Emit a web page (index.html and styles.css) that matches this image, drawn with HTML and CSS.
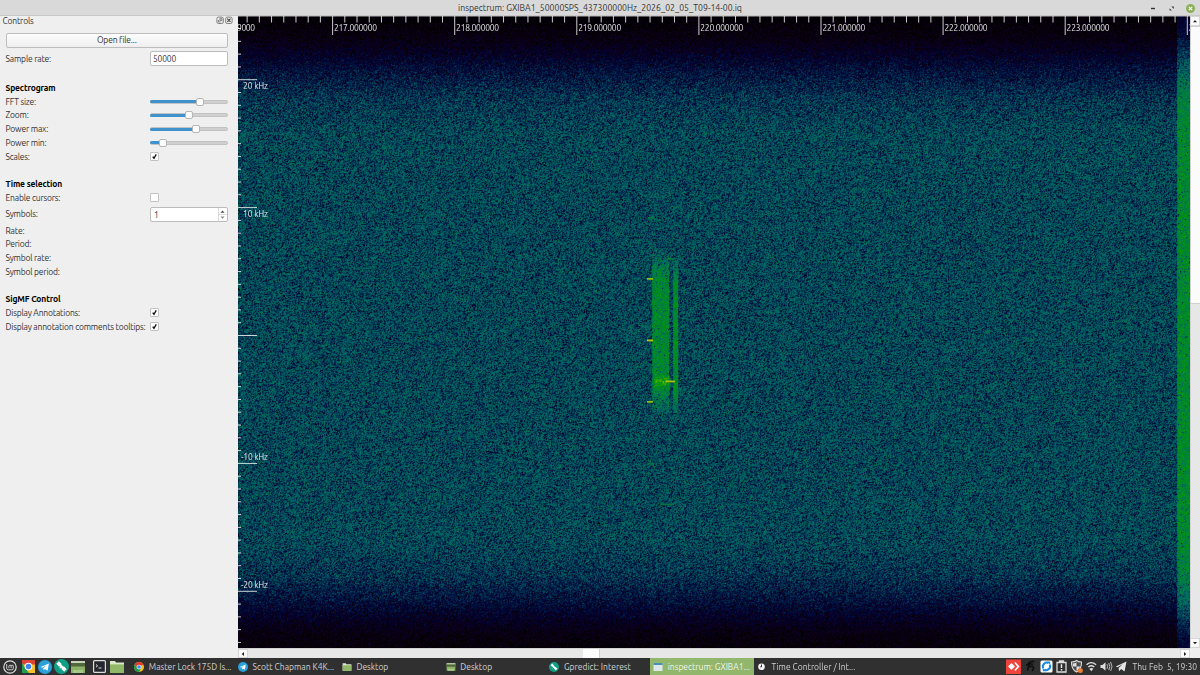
FILE: index.html
```html
<!DOCTYPE html>
<html lang="en">
<head>
    <meta charset="UTF-8">
    <meta name="viewport" content="width=device-width, initial-scale=1.0">
    <title>inspectrum</title>
    <link rel="stylesheet" href="styles.css">
</head>
<body>

    <!-- Title bar -->
    <header class="titlebar">
        <span class="window-title">inspectrum: GXIBA1_50000SPS_437300000Hz_2026_02_05_T09-14-00.iq</span>
        <svg class="window-buttons" width="52" height="16" viewBox="0 0 52 16">
            <path d="M3 7.5h4" stroke="#333" stroke-width="1.4"/>
            <path d="M23.4 5.5h2.400v2.400zM21.600 7.300v2.200h2.200z" fill="#333"/>
            <circle cx="42.5" cy="7.5" r="4.5" fill="#8bb158"/>
            <path d="M40.8 5.8l3.4 3.4M44.2 5.8l-3.4 3.4" stroke="#fff" stroke-width="1.2"/>
        </svg>
    </header>

    <main class="window">
        <!-- Controls dock -->
        <aside class="dock">
            <div class="dock-title">
                <span>Controls</span>
                <svg width="17" height="9" viewBox="0 0 17 9" fill="none" stroke="#666" stroke-width=".8">
                    <rect x=".9" y="1.1" width="6.4" height="6.4" rx="1.5"/>
                    <path d="M3.9 2.6h2v2h-2zM2.5 4v2h2"/>
                    <rect x="9.7" y="1.1" width="6.4" height="6.4" rx="1.5"/>
                    <path d="M11.3 2.7l3.2 3.2M14.5 2.7l-3.2 3.2" stroke="#444" stroke-width="1.1"/>
                </svg>
            </div>
            <button class="open-btn">Open file...</button>
            <div class="row row-rate"><label>Sample rate:</label><div class="field">50000</div></div>

            <section>
                <h2 class="row">Spectrogram</h2>
                <div class="row"><label>FFT size:</label><div class="slider"><i style="width: 50px"></i></div></div>
                <div class="row"><label>Zoom:</label><div class="slider"><i style="width: 39px"></i></div></div>
                <div class="row"><label>Power max:</label><div class="slider"><i style="width: 46px"></i></div></div>
                <div class="row"><label>Power min:</label><div class="slider"><i style="width: 12.5px"></i></div></div>
                <div class="row"><label>Scales:</label><div class="check"><svg viewBox="0 0 8 8"><path d="M2 4.1l1.4 1.9L6 1.6"/></svg></div></div>
            </section>

            <section>
                <h2 class="row">Time selection</h2>
                <div class="row"><label>Enable cursors:</label><div class="check"></div></div>
                <div class="row row-symbols"><label>Symbols:</label>
                    <div class="field spin">1
                        <svg width="9" height="13" viewBox="0 0 9 13">
                            <path d="M.5 0v13M.5 6.5h8" stroke="#ccc" stroke-width=".7"/>
                            <path d="M2.5 4.7h4l-2-2.3z" fill="#444"/>
                            <path d="M2.5 8.5h4l-2 2.3z" fill="#888"/>
                        </svg>
                    </div>
                </div>
                <div class="row"><label>Rate:</label></div>
                <div class="row"><label>Period:</label></div>
                <div class="row"><label>Symbol rate:</label></div>
                <div class="row"><label>Symbol period:</label></div>
            </section>

            <section>
                <h2 class="row">SigMF Control</h2>
                <div class="row"><label>Display Annotations:</label><div class="check"><svg viewBox="0 0 8 8"><path d="M2 4.1l1.4 1.9L6 1.6"/></svg></div></div>
                <div class="row"><label>Display annotation comments tooltips:</label><div class="check"><svg viewBox="0 0 8 8"><path d="M2 4.1l1.4 1.9L6 1.6"/></svg></div></div>
            </section>
        </aside>

        <!-- Spectrogram view -->
        <div class="view">
            <div class="plot">
                <canvas id="spectrogram" width="952" height="632"></canvas>
                <svg id="scales" width="952" height="632"></svg>
            </div>
            <div class="vscroll">
                <span class="arrow"><svg viewBox="0 0 6 6"><path d="M1 4.3h4L3 2z"/></svg></span>
                <span class="vhandle"></span>
                <span class="vtrack"></span>
                <span class="arrow"><svg viewBox="0 0 6 6"><path d="M1 2h4L3 4.3z"/></svg></span>
            </div>
            <div class="hscroll">
                <span class="arrow"><svg viewBox="0 0 6 6"><path d="M4 1v4L1.7 3z"/></svg></span>
                <span class="htrack"><span class="hhandle"></span></span>
                <span class="arrow"><svg viewBox="0 0 6 6"><path d="M2 1v4L4.3 3z"/></svg></span>
            </div>
        </div>
    </main>

    <!-- Shared icons -->
    <svg class="defs" width="0" height="0">
        <symbol id="chrome" viewBox="0 0 16 16">
            <circle cx="8" cy="8" r="8" fill="#fbc116"/>
            <path d="M1.1 4A8 8 0 0 1 14.9 4L8 8H4.5z" fill="#e33b2e"/>
            <path d="M1.1 4A8 8 0 0 0 8 16l3.3-6.2L8 8H4.5z" fill="#219a4b"/>
            <circle cx="8" cy="8" r="3.8" fill="#fff"/>
            <circle cx="8" cy="8" r="2.9" fill="#4285f4"/>
        </symbol>
        <symbol id="telegram" viewBox="0 0 16 16">
            <circle cx="8" cy="8" r="8" fill="#2aa1da"/>
            <path d="M3 8l9.5-4-1.6 8.4-3-2.1-1.5 1.5-.4-2.5 4-3.5-5 3.1z" fill="#fff"/>
        </symbol>
        <symbol id="satellite" viewBox="0 0 16 16">
            <circle cx="8" cy="8" r="8" fill="#12a085"/>
            <path d="M3.800 3.800l3 3M9.200 9.200l3 3" stroke="#fff" stroke-width="3.8"/>
            <path d="M6.500 6.500l3 3" stroke="#fff" stroke-width="2.600"/>
            <path d="M6 10l1.500-1.500" stroke="#fff" stroke-width="1.200"/>
        </symbol>
        <symbol id="folder" viewBox="0 0 16 14">
            <path d="M1 1h5l1 1.5h8V13H1z" fill="#dce8cc"/>
            <path d="M1 4h14v9H1z" fill="#91b769"/>
            <path d="M1 4h14v1H1z" fill="#aecb8d"/>
        </symbol>
        <symbol id="desktop" viewBox="0 0 16 14">
            <path d="M1 1h14v12H1z" fill="#8db267"/>
            <path d="M1 1h14v2H1z" fill="#c7d4bb"/>
            <path d="M1 3h14v3.5H1z" fill="#51683d"/>
            <path d="M3 10h10v3H3z" fill="#a9c98a"/>
        </symbol>
    </svg>

    <!-- Taskbar -->
    <footer class="taskbar">
        <div class="launchers">
            <svg class="mint" width="14" height="14" viewBox="0 0 14 14" fill="none" stroke="#ddd">
                <circle cx="7" cy="7" r="6.2" stroke-width="1.2"/>
                <path d="M3.7 4v4.3q0 1.5 1.5 1.5h3.6q1.5 0 1.5-1.5V6.2q0-1-1.1-1t-1.1 1v2M8.1 6.2q0-1-1.1-1t-1.1 1v2" stroke-width=".9"/>
            </svg>
            <svg class="chrome-launch" width="13" height="13" viewBox="0 0 13 13">
                <path d="M0 0h13v13H0z" fill="#f4c22c"/>
                <path d="M0 0h13v4.5H0z" fill="#dd4437"/>
                <path d="M0 3l4 6 3 4H0z" fill="#239c54"/>
                <circle cx="6.5" cy="6.5" r="3.8" fill="#fff"/>
                <circle cx="6.5" cy="6.5" r="2.8" fill="#4285f4"/>
            </svg>
            <svg class="tg-launch" width="14" height="14"><use href="#telegram"/></svg>
            <svg class="sat-launch" width="15" height="15"><use href="#satellite"/></svg>
            <svg class="desk-launch" width="16" height="14"><use href="#desktop"/></svg>
            <svg class="term-launch" width="13" height="13" viewBox="0 0 13 13">
                <rect x=".6" y=".6" width="11.8" height="11.8" rx="1" fill="#25272f" stroke="#ddd" stroke-width="1.2"/>
                <path d="M3 4.5l1.6 1.3L3 7.1M5.5 8h3" stroke="#eee" fill="none" stroke-width=".9"/>
            </svg>
            <svg class="folder-launch" width="16" height="14"><use href="#folder"/></svg>
        </div>
        <div class="tasks">
            <div class="task"><svg><use href="#chrome"/></svg><span>Master Lock 175D Is...</span></div>
            <div class="task"><svg><use href="#telegram"/></svg><span>Scott Chapman K4K...</span></div>
            <div class="task"><svg><use href="#folder"/></svg><span>Desktop</span></div>
            <div class="task"><svg><use href="#desktop"/></svg><span>Desktop</span></div>
            <div class="task"><svg><use href="#satellite"/></svg><span>Gpredict: Interest</span></div>
            <div class="task active"><svg viewBox="0 0 10 10"><path d="M.5 1h9v8h-9z" fill="#dce6ed"/><path d="M.5 1h9v2h-9z" fill="#4c8cb8"/></svg><span>inspectrum: GXIBA1...</span></div>
            <div class="task"><svg viewBox="0 0 10 10"><circle cx="4.500" cy="4.7" r="3.3" fill="#f4f4f4"/><path d="M4.500 2.5v2.4H3.1" stroke="#333" fill="none"/></svg><span>Time Controller / Int...</span></div>
        </div>
        <div class="tray">
            <svg width="127" height="17" viewBox="0 0 127 17">
                <path d="M0 1.5h15v14.5H0z" fill="#ef443b"/>
                <path d="M2 8.5l3.5-3.5L9 8.5 5.500 12z" fill="#fff"/>
                <path d="M8.300 5l1-.9 4.200 4.400-4.200 4.400-1-.9 3-3.500z" fill="#fff"/>
                <path d="M28.500 3.500q-6-.5-6 2.500t4 2.500q2.500 1-.5 4.500M20 7.500q3-3 7-1M22 12.500q-1-3.500 2-4.500" fill="none" stroke="#0c0c0c" stroke-width="1.500"/>
                <rect x="34.500" y="2.500" width="12" height="12" rx="1.500" fill="#fff"/>
                <path d="M37.300 10.200a3.800 3.800 0 0 1 5.300-5M43.700 6.600a3.800 3.800 0 0 1-5.300 5" fill="none" stroke="#168be1" stroke-width="2"/>
                <path d="M41 3.500h3.200v3.300zM40 13.300h-3.200V10z" fill="#168be1"/>
                <path d="M51 4.500h9v9.500h-9zM53.500 4.500V3h4v1.500" fill="none" stroke="#ddd" stroke-width="1.300"/>
                <path d="M55.500 6.200V10M55.500 11v1.500" stroke="#eee" stroke-width="1.400"/>
                <path d="M65.500 4q3.500 0 5-1.500Q72 4 75.500 4q.3 7-5 10-5.300-3-5-10z" fill="#4b4b4b" stroke="#ddd" stroke-width="1.100"/>
                <path d="M70.500 4.500v4H67q-.3-2-.3-3 2 0 3.800-1zM70.500 8.500h3.700q-.7 3-3.700 4.400z" fill="#ddd"/>
                <circle cx="74.300" cy="12.600" r="2.500" fill="#ef8033"/>
                <path d="M80.500 6.700q4.800-4 9.600 0M82.300 9q3-2.500 6 0" fill="none" stroke="#ddd" stroke-width="1.300"/>
                <path d="M83.300 10.700q2-1.500 4 0l-2 2.600z" fill="#ddd"/>
                <path d="M94.500 7h2l3-2.800v8.600l-3-2.800h-2z" fill="#ddd"/>
                <path d="M101 6.200q1.300 2.300 0 4.600M102.800 5q2 3.500 0 7M104.600 4q2.800 4.500 0 9" fill="none" stroke="#ccc" stroke-width=".9"/>
                <path d="M109.800 8.500L120.500 3.500l-2 10-3.300-2.500-2.200 2.300-.4-3.300 4.300-4-5.300 3.300z" fill="#e6e6e6"/>
            </svg>
            <span class="clock">Thu Feb&nbsp; 5, 19:30</span>
        </div>
    </footer>

    <script src="script.js"></script>
</body>
</html>
```
FILE: styles.css
```css
body {
    margin: 0;
    width: 1200px;
    height: 675px;
    overflow: hidden;
    display: flex;
    flex-direction: column;
    background-color: #efefef;
    font-family: Ubuntu, "Noto Sans", sans-serif;
    font-size: 8.5px;
    color: #333;
}

svg {
    display: block;
    flex: none;
}

.defs {
    position: absolute;
}

/* Title bar */
.titlebar {
    height: 16px;
    flex: none;
    display: grid;
    grid-template-columns: 52px 1fr 52px;
    align-items: center;
    background-color: #d9d9d9;
    box-sizing: border-box;
    border-bottom: 1px solid #c8c8c8;
}

.window-title {
    grid-column: 2;
    text-align: center;
    font-size: 8.7px;
    line-height: 17px;
}

.window {
    flex: 1;
    min-height: 0;
    display: flex;
}

/* Dock */
.dock {
    width: 238px;
    flex: none;
    box-sizing: border-box;
    padding: 0 10px 0 5.500px;
    letter-spacing: -.19px;
}

.dock-title {
    height: 16.500px;
    margin: 0 -5px 0 -3px;
    display: flex;
    justify-content: space-between;
    align-items: flex-start;
    line-height: 11px;
}

.open-btn {
    display: block;
    width: 100%;
    height: 15px;
    padding: 0;
    border: 1px solid #bdbdbd;
    border-radius: 2px;
    background: linear-gradient(#fdfdfd, #efefef);
    font: inherit;
    letter-spacing: inherit;
    line-height: 12px;
    color: inherit;
}

.row {
    height: 13.750px;
    display: grid;
    grid-template-columns: 144.500px 1fr;
    align-items: center;
    line-height: 12px;
    white-space: nowrap;
}

.row-rate {
    height: 17px;
    margin-top: 2.500px;
}

.row-symbols {
    height: 19.200px;
}

section {
    margin-bottom: 13.500px;
}

.row-rate + section {
    margin-top: 14px;
}

h2 {
    margin: 0;
    font-size: 8.5px;
    letter-spacing: -.15px;
    color: #000;
}

.field {
    height: 15px;
    box-sizing: border-box;
    border: 1px solid #bcbcbc;
    border-radius: 2px;
    background-color: #fff;
    padding-left: 2px;
    line-height: 14px;
}

.spin {
    display: flex;
    justify-content: space-between;
    padding-left: 3px;
}

.slider {
    height: 4px;
    box-sizing: border-box;
    border: 1px solid #c2c2c2;
    border-radius: 2px;
    background-color: #d0d0d0;
    display: flex;
    align-items: center;
}

.slider i {
    height: 3px;
    flex: none;
    margin-left: -1px;
    border-radius: 2px;
    background-color: #3f92cb;
    display: flex;
    align-items: center;
    justify-content: flex-end;
}

.slider i::after {
    content: "";
    width: 8px;
    height: 8px;
    flex: none;
    box-sizing: border-box;
    margin-right: -4px;
    border: 1px solid #b5b5b5;
    border-radius: 2px;
    background-color: #fcfcfc;
}

.check {
    width: 9px;
    height: 9px;
    box-sizing: border-box;
    border: 1px solid #c3c3c3;
    border-radius: 1px;
    background-color: #fff;
}

.check path {
    fill: none;
    stroke: #111;
    stroke-width: 1.5;
}

/* Spectrogram */
.view {
    flex: 1;
    display: grid;
    grid-template-columns: 952px 10px;
    grid-template-rows: 632px 10px;
}

.plot {
    display: grid;
    background-color: #000;
}

.plot > * {
    grid-area: 1 / 1;
    display: block;
}

#scales text {
    fill: #e2e2e2;
    font-size: 8.5px;
}

/* Scroll bars */
.vscroll,
.hscroll {
    display: flex;
    background-color: #e7e7e7;
}

.vscroll {
    flex-direction: column;
}

.hscroll {
    grid-column: 1;
    box-sizing: border-box;
    border-top: 1px solid #d2d2d2;
}

.arrow {
    width: 10px;
    height: 10px;
    flex: none;
    display: flex;
    align-items: center;
    justify-content: center;
    box-sizing: border-box;
    border: 1px solid #d6d6d6;
    background-color: #fafafa;
}

.hscroll .arrow {
    height: 9px;
}

.arrow svg {
    width: 6px;
    height: 6px;
    fill: #222;
}

.vhandle {
    height: 278px;
    box-sizing: border-box;
    background-color: #fbfbfb;
    border: solid #d0d0d0;
    border-width: 1px 0 1px 1px;
}

.vtrack {
    flex: 1;
    border-left: 1px solid #d4d4d4;
}

.htrack {
    flex: 1;
    display: flex;
}

.hhandle {
    width: 16px;
    margin-left: 335px;
    background-color: #fcfcfc;
    border-right: 1px solid #d0d0d0;
}

/* Taskbar */
.taskbar {
    height: 17px;
    flex: none;
    display: flex;
    background-color: #303030;
    color: #d0d0d0;
    font-size: 8.5px;
}

.launchers {
    width: 131.300px;
    flex: none;
    box-sizing: border-box;
    padding-left: 3px;
    display: flex;
    align-items: center;
}

.chrome-launch {
    margin-left: 5px;
}

.tg-launch {
    margin-left: 3px;
}

.sat-launch {
    margin-left: 2px;
}

.desk-launch {
    margin-left: 1px;
}

.term-launch {
    margin-left: 7px;
}

.folder-launch {
    margin-left: 3px;
}

.tasks {
    display: flex;
}

.task {
    width: 103.800px;
    box-sizing: border-box;
    padding-left: 3px;
    display: flex;
    align-items: center;
    gap: 4.500px;
    line-height: 16px;
    white-space: nowrap;
}

.task svg {
    width: 10px;
    height: 10px;
}

.active {
    background-color: #91b66c;
    color: #f0f5ea;
}

.tray {
    margin-left: auto;
    padding-right: 3px;
    display: flex;
    align-items: center;
}

.clock {
    width: 64px;
    display: flex;
    justify-content: flex-end;
    line-height: 16px;
    white-space: nowrap;
}
```
FILE: script.js
```js
const canvas = document.getElementById('spectrogram');
const scales = document.getElementById('scales');
const W = canvas.width;
const H = canvas.height;

// Small seeded generator so the noise is stable between reloads
let seed = 437300;
function rand() {
    seed = (Math.imul(seed, 1664525) + 1013904223) >>> 0;
    return (seed + 1) / 4294967297;
}

// p = 0 is the strongest signal (red), p = 1 the weakest (black)
function color(p) {
    p = Math.min(1, Math.max(0, p));
    const h = p * 0.83 * 6;
    const v = (1 - p) * 255;
    const f = n => {
        const k = (n + h) % 6;
        return v - v * Math.max(0, Math.min(k, 4 - k, 1));
    };
    return [f(5), f(3), f(1)];
}

// Noise floor by distance from the upper or lower edge
const floorPoints = [[0, 0.98], [20, 0.92], [36, 0.83], [54, 0.74], [80, 0.66], [115, 0.622], [400, 0.622]];
function noiseFloor(y) {
    const d = Math.min(y, H - y + 7);
    for (let i = 1; i < floorPoints.length; i++) {
        const [x0, p0] = floorPoints[i - 1];
        const [x1, p1] = floorPoints[i];
        if (d <= x1) return p0 + (p1 - p0) * (d - x0) / (x1 - x0);
    }
    return 0.622;
}

function fade(y, top, bottom, size) {
    return Math.max(0, Math.min(1, (y - top) / size, (bottom - y) / size));
}

function drawSpectrogram() {
    const ctx = canvas.getContext('2d');
    const img = ctx.createImageData(W, H);
    // Samples of the row above, mixed into each pixel to coarsen the grain
    let above = [];
    for (let y = 0; y < H; y++) {
        const base = noiseFloor(y);
        const row = [];
        let left = [0, 0, 0];
        for (let x = 0; x < W; x++) {
            let p = base;
            let gain = 0.062;
            if (x >= 939) {
                p -= 0.17;
                gain = 0.048;
            }
            if (x >= 414 && x < 431) {
                const k = fade(y, 232, 402, 30);
                p -= 0.165 * k;
                gain -= 0.015 * k;
            }
            if (x >= 435 && x < 440) {
                const k = fade(y, 240, 402, 25);
                p -= 0.175 * k;
                gain -= 0.02 * k;
            }
            // Burst centre
            if (x > 415 && x < 433 && Math.abs(y - 365) < 7) p -= 0.12 * (1 - Math.abs(y - 365) / 7);
            const c = color(p - gain * Math.log(-Math.log(rand())));
            const up = above[x] || c;
            const o = (y * W + x) * 4;
            for (let i = 0; i < 3; i++) img.data[o + i] = c[i] * 0.64 + left[i] * 0.18 + up[i] * 0.18;
            img.data[o + 3] = 255;
            row.push(c);
            left = c;
        }
        above = row;
    }
    ctx.putImageData(img, 0, 0);

    // Tones: x, y, width, colour
    const tones = [
        [409, 262, 6, '#8fb808'], [409, 323.5, 6, '#b4c80a'], [409, 385, 6, '#8fb808'],
        [428, 364.5, 9, '#a5c20a'], [410, 201, 6, '#077a3c'], [430, 242, 5, '#078030'],
        [410, 447, 6, '#077040'], [422, 487.500, 14, '#07703c']
    ];
    tones.forEach(([x, y, w, c]) => {
        ctx.fillStyle = c;
        ctx.fillRect(x, y, w, 1.800);
    });
}

function add(name, attrs, text) {
    const el = document.createElementNS('http://www.w3.org/2000/svg', name);
    for (const key in attrs) el.setAttribute(key, attrs[key]);
    if (text) el.textContent = text;
    scales.appendChild(el);
}

function drawScales() {
    const white = 'rgba(255,255,255,.8)';

    // Time scale
    const step = 122.1;
    for (let i = -7; i <= 70; i++) {
        const x = 94.6 + i * step / 10;
        const major = i % 10 === 0;
        add('path', { d: `M${x} 0V${major ? 19 : 6.500}`, stroke: white });
        if (major) add('text', { x: x + 1.400, y: 15.300, textLength: 43 }, (217 + i / 10).toFixed(6));
    }
    add('text', { x: -1, y: 15.300, textLength: 18 }, '9000');

    // Frequency scale
    for (let i = -24; i <= 24; i++) {
        const y = 319.5 - i * 12.79;
        const major = i % 10 === 0;
        add('path', { d: `M0 ${y}H${major ? 19 : 3}`, stroke: white });
        if (major && i > 0) add('text', { x: 5, y: y + 9, textLength: 25 }, i + ' kHz');
        if (major && i < 0) add('text', { x: 3, y: y - 3.500, textLength: 27 }, i + ' kHz');
    }
    add('path', { d: `M0 .5H${W}`, stroke: 'rgba(255,255,255,.35)' });
}

drawSpectrogram();
drawScales();
```
